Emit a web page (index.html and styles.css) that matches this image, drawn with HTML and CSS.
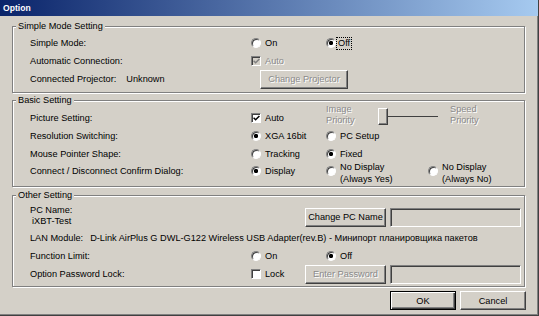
FILE: index.html
```html
<!DOCTYPE html>
<html>
<head>
<meta charset="utf-8">
<title>Option</title>
<link rel="stylesheet" href="styles.css">
</head>
<body>
<div class="window">
  <div class="titlebar">Option</div>

  <fieldset class="group g1">
    <legend>Simple Mode Setting</legend>
    <div class="rows rows-a">
      <div class="label">Simple Mode:</div>
      <div class="opt c2"><span class="radio"></span><span>On</span></div>
      <div class="opt c3"><span class="radio on"></span><span class="focus">Off</span></div>

      <div class="label">Automatic Connection:</div>
      <div class="opt c2 dis"><span class="check off"><svg class="tick" viewBox="0 0 7 7" width="7" height="7"><path d="M0.6 2.8 L2.6 4.8 L6.4 1"/></svg></span><span>Auto</span></div>

      <div class="label">Connected Projector:<span class="value">Unknown</span></div>
      <button class="btn disabled proj">Change Projector</button>
    </div>
  </fieldset>

  <fieldset class="group g2">
    <legend>Basic Setting</legend>
    <div class="rows rows-b">
      <div class="label">Picture Setting:</div>
      <div class="opt c2"><span class="check"><svg class="tick" viewBox="0 0 7 7" width="7" height="7"><path d="M0.6 2.8 L2.6 4.8 L6.4 1"/></svg></span><span>Auto</span></div>
      <div class="slider">
        <div class="dtext">Image<br>Priority</div>
        <div class="thumb"></div>
        <div class="track"></div>
        <div class="dtext speed">Speed<br>Priority</div>
      </div>

      <div class="label">Resolution Switching:</div>
      <div class="opt c2"><span class="radio on"></span><span>XGA 16bit</span></div>
      <div class="opt c3"><span class="radio"></span><span>PC Setup</span></div>

      <div class="label">Mouse Pointer Shape:</div>
      <div class="opt c2"><span class="radio"></span><span>Tracking</span></div>
      <div class="opt c3"><span class="radio on"></span><span>Fixed</span></div>

      <div class="label">Connect / Disconnect Confirm Dialog:</div>
      <div class="opt c2"><span class="radio on"></span><span>Display</span></div>
      <div class="opt c3 two"><span class="radio"></span><span class="txt">No Display<br>(Always Yes)</span></div>
      <div class="opt c4 two"><span class="radio"></span><span class="txt">No Display<br>(Always No)</span></div>
    </div>
  </fieldset>

  <fieldset class="group g3">
    <legend>Other Setting</legend>
    <div class="rows rows-c">
      <div class="label pcname">PC Name:<br><span class="indent">iXBT-Test</span></div>
      <button class="btn side">Change PC Name</button>
      <div class="field c5"></div>

      <div class="label lan">LAN Module:<span class="lanval">D-Link AirPlus G DWL-G122 Wireless USB Adapter(rev.B) - Минипорт планировщика пакетов</span></div>

      <div class="label">Function Limit:</div>
      <div class="opt c2"><span class="radio"></span><span>On</span></div>
      <div class="opt c4"><span class="radio on"></span><span>Off</span></div>

      <div class="label">Option Password Lock:</div>
      <div class="opt c2"><span class="check empty"></span><span>Lock</span></div>
      <button class="btn side disabled">Enter Password</button>
      <div class="field c5"></div>
    </div>
  </fieldset>

  <div class="footer">
    <button class="btn default">OK</button>
    <button class="btn">Cancel</button>
  </div>
</div>
</body>
</html>
```

FILE: styles.css
```css
* {
  box-sizing: border-box;
}

html,
body {
  margin: 0;
  padding: 0;
}

body {
  background: #d4d0c8;
  font-family: "Liberation Sans", Arial, sans-serif;
  font-size: 9.2px;
  color: #000;
}

.window {
  width: 539px;
  height: 316px;
  border-right: 1px solid #404040;
  border-bottom: 1px solid #404040;
  box-shadow: inset -1px -1px 0 #808080;
  overflow: hidden;
}

.titlebar {
  height: 16px;
  line-height: 16px;
  padding-left: 3px;
  background: linear-gradient(to right, #0a246a, #a6caf0);
  color: #fff;
  font-weight: bold;
  font-size: 8.6px;
}

.group {
  margin: 0 0 0 12px;
  padding: 0;
  width: 513px;
  min-inline-size: 0;
  border: 1px solid #808080;
  box-shadow: inset 1px 1px 0 #fff, 1px 1px 0 #fff;
}

.group legend {
  margin-left: 3px;
  padding: 0 2px;
  line-height: 11px;
  background: #d4d0c8;
}

.g1 { margin-top: 5px; }
.g2 { margin-top: 2px; }
.g3 { margin-top: 3px; }

.rows {
  display: grid;
  padding-left: 17px;
  align-items: center;
  white-space: nowrap;
}

.rows-a {
  grid-template-columns: 221px 75px 102px 1fr;
  grid-template-rows: 18px 18px 18px;
  padding-top: 2px;
  padding-bottom: 4px;
}

.rows-b {
  grid-template-columns: 221px 75px 102px 1fr;
  grid-template-rows: 18px 18px 17px 18px;
  padding-top: 3px;
  padding-bottom: 6px;
}

.rows-c {
  grid-template-columns: 221px 54px 21px 64px 131px;
  grid-template-rows: 24px 18px 18px 18px;
  padding-top: 4px;
  padding-bottom: 3px;
}

.label { grid-column: 1; }
.c2 { grid-column: 2; }
.c3 { grid-column: 3; }
.c4 { grid-column: 4; }
.c5 { grid-column: 5; }

.value { margin-left: 10px; }

.pcname {
  align-self: start;
  line-height: 11px;
}

.indent { padding-left: 2px; }

.lan { grid-column: 1 / -1; }
.lanval { margin-left: 7px; }

.opt {
  display: flex;
  align-items: center;
  gap: 4px;
}

.opt.dis,
.dtext {
  color: #8a8a8a;
  text-shadow: 1px 1px 0 #fff;
}

.opt.two .txt {
  line-height: 12px;
  margin-top: 4px;
}

.radio {
  flex: none;
  width: 10px;
  height: 10px;
  border-radius: 50%;
  border: 1px solid;
  border-color: #808080 #fff #fff #808080;
  background: #fff;
  box-shadow: inset 1px 1px 0 #404040;
}

.radio.on {
  background: radial-gradient(circle at 50% 50%, #000 0 1.9px, #fff 2.4px);
}

.focus {
  margin-left: -3px;
  padding: 0 1px;
  line-height: 11px;
  outline: 1px dotted #000;
}

.check {
  flex: none;
  width: 10px;
  height: 10px;
  border: 1px solid;
  border-color: #808080 #fff #fff #808080;
  background: #fff;
  box-shadow: inset 1px 1px 0 #404040;
}

.check .tick {
  display: block;
  margin: 1px 0 0 1px;
  fill: none;
  stroke: #000;
  stroke-width: 1.5;
}

.check.off {
  background: #d4d0c8;
}

.check.off .tick {
  stroke: #808080;
}

.slider {
  grid-column: 3 / span 2;
  justify-self: start;
  display: flex;
  align-items: center;
  margin-bottom: 6px;
}

.dtext {
  width: 52px;
  line-height: 11px;
}

.dtext.speed {
  margin-left: 12px;
}

.thumb {
  width: 10px;
  height: 17px;
  margin-top: 3px;
  border: 1px solid;
  border-color: #fff #404040 #404040 #fff;
  box-shadow: inset -1px -1px 0 #808080;
  background: #d4d0c8;
}

.track {
  width: 50px;
  height: 1px;
  margin-top: 2px;
  background: #404040;
}

.btn {
  height: 19px;
  padding: 0;
  margin: 0;
  font: inherit;
  color: #000;
  background: #d4d0c8;
  border: 1px solid;
  border-color: #fff #404040 #404040 #fff;
  box-shadow: inset -1px -1px 0 #808080;
  border-radius: 0;
  white-space: nowrap;
}

.btn.disabled {
  color: #8a8a8a;
  text-shadow: 1px 1px 0 #fff;
}

.btn.proj {
  grid-column: 2 / span 2;
  justify-self: start;
  width: 88px;
  margin-left: 9px;
}

.btn.side {
  grid-column: 3 / span 2;
  justify-self: start;
  width: 81px;
}

.btn.default {
  border-color: #000;
  box-shadow: inset 1px 1px 0 #fff, inset -1px -1px 0 #404040, inset -2px -2px 0 #808080;
}

.field {
  height: 19px;
  border: 1px solid;
  border-color: #808080 #fff #fff #808080;
  box-shadow: inset 1px 1px 0 #404040;
  background: #d4d0c8;
}

.footer {
  display: flex;
  justify-content: flex-end;
  gap: 4px;
  margin-top: 4px;
  padding-right: 12px;
}

.footer .btn {
  width: 66px;
}
```
